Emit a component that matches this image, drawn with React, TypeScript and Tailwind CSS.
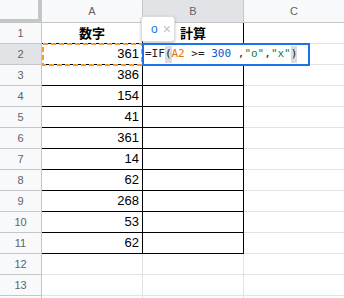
import React from "react";

const ROWS = 14;
const data: Record<number, [string, string]> = {
  1: ["数字", "計算"],
  2: ["361", ""],
  3: ["386", ""],
  4: ["154", ""],
  5: ["41", ""],
  6: ["361", ""],
  7: ["14", ""],
  8: ["62", ""],
  9: ["268", ""],
  10: ["53", ""],
  11: ["62", ""],
};

const uiFont = { fontFamily: '"Liberation Sans", Arial, sans-serif' };

export default function App() {
  const rows = Array.from({ length: ROWS }, (_, i) => i + 1);
  return (
    <div className="relative w-[344px] h-[298px] overflow-hidden bg-white" style={uiFont}>
      <div className="grid grid-cols-[42px_101px_101px_100px] grid-rows-[23px_repeat(14,21px)]">
        {/* header row */}
        <div className="bg-[#f8f9fa] border-r-4 border-b-4 border-[#c4c7c5]" />
        <div className="bg-[#f8f9fa] border-r border-b border-[#c4c7c5] flex items-center justify-center text-[11px] text-[#5f6368]">A</div>
        <div className="bg-[#e1e3e6] border-r border-b border-[#c4c7c5] flex items-center justify-center text-[11px] text-[#5f6368]">B</div>
        <div className="bg-[#f8f9fa] border-b border-[#c4c7c5] flex items-center justify-center text-[11px] text-[#5f6368]">C</div>
        {rows.map((r) => {
          const inTable = r <= 11;
          const d = data[r];
          const header = r === 1;
          return (
            <React.Fragment key={r}>
              <div
                className={`${r === 2 ? "bg-[#e1e3e6]" : "bg-[#f8f9fa]"} border-r border-b border-[#c4c7c5] flex items-center justify-center text-[11px] text-[#5f6368]`}
              >
                {r < 14 ? r : ""}
              </div>
              <div
                className={`border-r border-b ${inTable ? "border-black" : "border-[#e2e2e2]"} flex items-center ${header ? "justify-center font-bold text-[13px]" : "justify-end pr-[3px] text-[13px]"} text-black`}
                style={header ? { fontFamily: '"Noto Sans CJK JP", sans-serif' } : undefined}
              >
                {d ? d[0] : ""}
              </div>
              <div
                className={`border-r border-b ${inTable ? "border-black" : "border-[#e2e2e2]"} flex items-center justify-center font-bold text-[13px] text-black`}
                style={{ fontFamily: '"Noto Sans CJK JP", sans-serif' }}
              >
                {d ? d[1] : ""}
              </div>
              <div className="border-b border-[#e2e2e2]" />
            </React.Fragment>
          );
        })}
      </div>

      {/* dashed reference highlight on A2 */}
      <svg className="absolute left-[42px] top-[43px]" width="101" height="23">
        <rect x="1" y="1" width="99" height="21" fill="none" stroke="#f29a38" strokeWidth="2" strokeDasharray="5 3" />
      </svg>

      {/* result tooltip */}
      <div className="absolute left-[141px] top-[16px] w-[34px] h-[26px] bg-white rounded-[3px] border border-[#dadce0] shadow-[0_1px_3px_rgba(0,0,0,0.25)] flex items-center pl-[9px] gap-[5px]">
        <span className="text-[12px] text-[#1a73e8] leading-none" style={uiFont}>o</span>
        <span className="text-[14px] text-[#bdc1c6] leading-none" style={uiFont}>×</span>
      </div>

      {/* formula editor */}
      <div
        className="absolute left-[142px] top-[43px] w-[168px] h-[23px] bg-white border-2 border-[#1a73e8] flex items-center pl-[1px] text-[11px] whitespace-pre text-[#202124]"
        style={{ fontFamily: '"DejaVu Sans Mono", Menlo, monospace' }}
      >
        <span>=IF</span>
        <span className="bg-[#dadce0]">(</span>
        <span className="text-[#e8710a]">A2</span>
        <span> &gt;= </span>
        <span className="text-[#1155cc]">300</span>
        <span> ,</span>
        <span className="text-[#0b8043]">"o"</span>
        <span>,</span>
        <span className="text-[#0b8043]">"x"</span>
        <span className="bg-[#dadce0]">)</span>
      </div>
    </div>
  );
}
